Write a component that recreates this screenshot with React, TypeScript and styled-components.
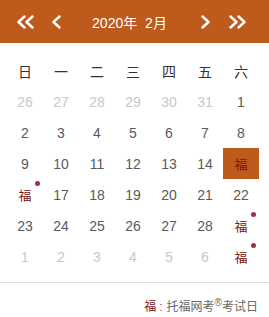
import styled, { createGlobalStyle } from "styled-components";

const GlobalStyle = createGlobalStyle`
    html, body {
        margin: 0;
        padding: 0;
        background: #fff;
        font-family: "Liberation Sans", "Noto Sans CJK SC", sans-serif;
    }
`

const Calendar = styled.div`
    width: 269px;
    height: 317px;
    background: #fff;
    display: flex;
    flex-direction: column;
`

const Header = styled.div`
    height: 43px;
    background: #bd5a1c;
    display: flex;
    align-items: center;
    padding: 0 22px 0 16px;
    box-sizing: border-box;
    color: #fff;
`

const NavButton = styled.span<{ $gap?: number }>`
    display: flex;
    align-items: center;
    margin-left: ${(p) => p.$gap || 0}px;
    cursor: pointer;
`

const Title = styled.div`
    flex: 1;
    text-align: center;
    font-size: 14px;
    padding-right: 4px;
    word-spacing: 4px;
`

const Grid = styled.div`
    display: grid;
    grid-template-columns: repeat(7, 36px);
    grid-auto-rows: 31px;
    padding: 12px 0 0 7px;
`

const WeekDay = styled.div`
    display: flex;
    align-items: center;
    justify-content: center;
    font-size: 14px;
    color: #333;
`

const Day = styled.div<{ $muted?: boolean; $active?: boolean }>`
    position: relative;
    display: flex;
    align-items: center;
    justify-content: center;
    font-size: 14px;
    color: ${(p) => (p.$muted ? "#c8c8c8" : "#5a5a5a")};
    background: ${(p) => (p.$active ? "#bd5a1c" : "transparent")};
`

const Fu = styled.span`
    color: #7a1414;
    font-size: 13px;
`

const Dot = styled.i`
    position: absolute;
    top: 2px;
    right: 3px;
    width: 5px;
    height: 5px;
    border-radius: 50%;
    background: #9c3340;
`

const Divider = styled.div`
    margin-top: 10px;
    border-top: 1px solid #dedede;
`

const Footer = styled.div`
    text-align: right;
    padding: 14px 11px 0 0;
    font-size: 12px;
    color: #666;
    & ${Fu} {
        font-size: 12px;
    }
    & sup {
        font-size: 10px;
        vertical-align: 5px;
        line-height: 0;
    }
`

const Colon = styled.span`
    margin: 0 4px 0 3px;
`

const Chevron = ({ dir, double }: { dir: "left" | "right"; double?: boolean }) => {
    const w = double ? 19 : 12
    const pts = (x: number) =>
        dir === "left" ? `${x + 7},1.5 ${x + 1},7 ${x + 7},12.5` : `${x + 1},1.5 ${x + 7},7 ${x + 1},12.5`
    return (
        <svg width={w} height="14" viewBox={`0 0 ${w} 14`} fill="none" stroke="#fff" strokeWidth="2.4" strokeLinecap="round" strokeLinejoin="round">
            <polyline points={pts(1.5)} />
            {double && <polyline points={pts(9.5)} />}
        </svg>
    )
}

type Cell = { label: string; muted?: boolean; fu?: boolean; active?: boolean; dot?: boolean }

const weekDays = ["日", "一", "二", "三", "四", "五", "六"]

const days: Cell[] = [
    ...[26, 27, 28, 29, 30, 31].map((d) => ({ label: String(d), muted: true })),
    ...[1, 2, 3, 4, 5, 6, 7, 8, 9, 10, 11, 12, 13, 14].map((d) => ({ label: String(d) })),
]
days[20] = { label: "福", fu: true, active: true }
days.push({ label: "福", fu: true, dot: true })
;[17, 18, 19, 20, 21, 22, 23, 24, 25, 26, 27, 28].forEach((d) => days.push({ label: String(d) }))
days.push({ label: "福", fu: true, dot: true })
;[1, 2, 3, 4, 5, 6].forEach((d) => days.push({ label: String(d), muted: true }))
days.push({ label: "福", fu: true, dot: true })

const App = () => {
    return (
        <>
            <GlobalStyle />
            <Calendar>
                <Header>
                    <NavButton><Chevron dir="left" double /></NavButton>
                    <NavButton $gap={16}><Chevron dir="left" /></NavButton>
                    <Title>2020年 2月</Title>
                    <NavButton><Chevron dir="right" /></NavButton>
                    <NavButton $gap={16}><Chevron dir="right" double /></NavButton>
                </Header>
                <Grid>
                    {weekDays.map((w) => (
                        <WeekDay key={w}>{w}</WeekDay>
                    ))}
                    {days.map((d, i) => (
                        <Day key={i} $muted={d.muted} $active={d.active}>
                            {d.fu ? <Fu>{d.label}</Fu> : d.label}
                            {d.dot && <Dot />}
                        </Day>
                    ))}
                </Grid>
                <Divider />
                <Footer>
                    <Fu>福</Fu><Colon>:</Colon>托福网考<sup>®</sup>考试日
                </Footer>
            </Calendar>
        </>
    )
}

export default App;
